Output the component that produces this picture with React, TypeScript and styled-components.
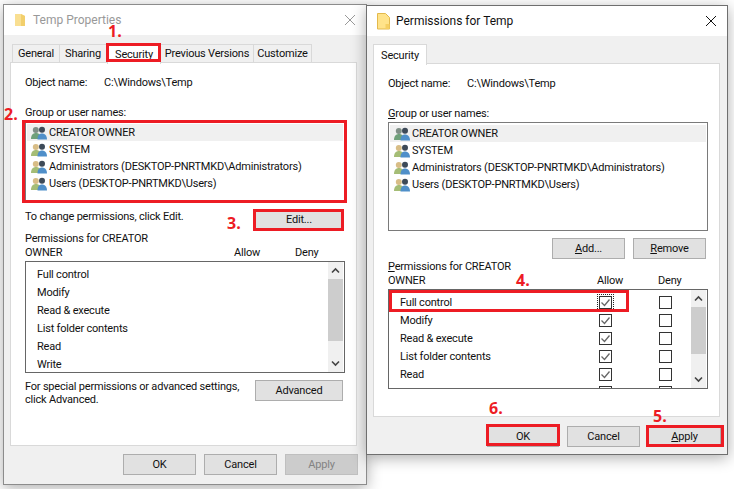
import React from "react";
import styled, { createGlobalStyle } from "styled-components";

const GlobalStyle = createGlobalStyle`
  html, body {
    margin: 0;
    padding: 0;
    background: #fff;
  }
  body {
    font-family: Roboto, "Liberation Sans", sans-serif;
    font-size: 11px;
    letter-spacing: -0.2px;
    color: #111;
  }
`;

const Desktop = styled.div`
  position: relative;
  width: 734px;
  height: 489px;
  overflow: hidden;
  display: flex;
  align-items: flex-start;
  padding: 4px 0 0 3px;
  box-sizing: border-box;
`;

const Window = styled.div<{ $width: number; $height: number; $active?: boolean }>`
  width: ${(p) => p.$width}px;
  height: ${(p) => p.$height}px;
  box-sizing: border-box;
  flex: none;
  display: flex;
  flex-direction: column;
  background: #f0f0f0;
  border: 1px solid ${(p) => (p.$active ? "#6f6f6f" : "#8c8c8c")};
  box-shadow: 0 3px 14px rgba(0, 0, 0, 0.32);
  z-index: ${(p) => (p.$active ? 2 : 1)};
  margin: ${(p) => (p.$active ? "1px 0 0 -1px" : "0")};
`;

const TitleBar = styled.div<{ $active?: boolean }>`
  height: 30px;
  flex: none;
  display: flex;
  align-items: center;
  background: #fff;
  padding: 0 8px 0 ${(p) => (p.$active ? 10 : 11)}px;
  gap: ${(p) => (p.$active ? 6 : 8)}px;
  color: ${(p) => (p.$active ? "#111" : "#999")};
  font-size: 12px;
  letter-spacing: 0;
`;

const TitleText = styled.span`
  flex: 1;
`;

const Body = styled.div`
  flex: 1;
  display: flex;
  flex-direction: column;
  padding: 9px 6px 0;
`;

const TabStrip = styled.div<{ $indent: number }>`
  display: flex;
  height: 18px;
  padding-left: ${(p) => p.$indent}px;
  position: relative;
  z-index: 1;
`;

const Tab = styled.div<{ $width: number; $selected?: boolean }>`
  width: ${(p) => p.$width}px;
  box-sizing: border-box;
  display: flex;
  align-items: center;
  justify-content: center;
  white-space: nowrap;
  border: 1px solid #d9d9d9;
  border-left-width: ${(p) => (p.$selected ? 1 : 0)}px;
  border-bottom: 0;
  background: ${(p) => (p.$selected ? "#fff" : "#f0f0f0")};
  height: ${(p) => (p.$selected ? 21 : 18)}px;
  margin-top: ${(p) => (p.$selected ? -1 : 0)}px;

  &:first-child {
    border-left-width: 1px;
  }
`;

const Panel = styled.div<{ $height: number; $width: number }>`
  width: ${(p) => p.$width}px;
  height: ${(p) => p.$height}px;
  flex: none;
  box-sizing: border-box;
  background: #fff;
  border: 1px solid #d9d9d9;
  padding: 12px 10px 0 14px;
`;

const ObjectRow = styled.div`
  display: flex;
  height: 16px;
  line-height: 16px;
  margin-bottom: 14px;
`;

const ObjectLabel = styled.span`
  width: 79px;
`;

const FieldLabel = styled.div`
  line-height: 16px;
  height: 16px;
`;

const ListBox = styled.div<{ $height: number; $width: number }>`
  width: ${(p) => p.$width}px;
  height: ${(p) => p.$height}px;
  box-sizing: border-box;
  border: 1px solid #7a7a7a;
  padding: 2px 1px 0;
  overflow: hidden;
`;

const UserRow = styled.div<{ $selected?: boolean }>`
  height: 17px;
  display: flex;
  align-items: center;
  padding-left: 4px;
  gap: 2px;
  background: ${(p) => (p.$selected ? "#f0f0f0" : "transparent")};
  white-space: nowrap;
`;

const EditRow = styled.div`
  display: flex;
  justify-content: space-between;
  height: 21px;
  margin-top: 7px;
  padding-right: 3px;
  line-height: 16px;
`;

const ButtonRow = styled.div`
  display: flex;
  justify-content: flex-end;
  gap: 8px;
  margin-top: 7px;
  padding-right: 3px;
`;

const Button = styled.div<{ $width: number; $disabled?: boolean }>`
  width: ${(p) => p.$width}px;
  height: 21px;
  flex: none;
  box-sizing: border-box;
  display: flex;
  align-items: center;
  justify-content: center;
  border: 1px solid ${(p) => (p.$disabled ? "#bfbfbf" : "#adadad")};
  background: ${(p) => (p.$disabled ? "#cccccc" : "#e1e1e1")};
  color: ${(p) => (p.$disabled ? "#838383" : "#111")};
`;

const PermHeader = styled.div<{ $top: number }>`
  display: grid;
  grid-template-columns: 209px 61px 1fr;
  margin-top: ${(p) => p.$top}px;
  line-height: 14px;
  align-items: end;
  margin-bottom: 1px;
`;

const PermTitle = styled.div`
  width: 150px;
`;

const PermList = styled.div<{ $height: number }>`
  position: relative;
  width: 320px;
  height: ${(p) => p.$height}px;
  box-sizing: border-box;
  border: 1px solid #666;
  display: flex;
  overflow: hidden;
`;

const PermRows = styled.div`
  flex: 1;
  padding-top: 3px;
`;

const PermRow = styled.div`
  display: grid;
  grid-template-columns: 199px 60px 1fr;
  align-items: center;
  height: 18px;
  padding-left: 11px;
  white-space: nowrap;
`;

const CheckBox = styled.div<{ $focused?: boolean }>`
  position: relative;
  width: 13px;
  height: 13px;
  box-sizing: border-box;
  border: 1px solid #333;
  background: #fff;
  display: flex;
  align-items: center;
  justify-content: center;

  ${(p) =>
    p.$focused &&
    `&::after {
      content: "";
      position: absolute;
      inset: -3px;
      border: 1px dotted #222;
    }`}
`;

const ScrollBar = styled.div`
  width: 15px;
  margin: 0 1px 0 0;
  flex: none;
  display: flex;
  flex-direction: column;
  align-items: stretch;
  background: #f0f0f0;
`;

const ScrollButton = styled.div`
  height: 17px;
  flex: none;
  display: flex;
  align-items: center;
  justify-content: center;
`;

const ScrollTrack = styled.div`
  flex: 1;
`;

const ScrollThumb = styled.div<{ $height: number }>`
  height: ${(p) => p.$height}px;
  background: #cdcdcd;
`;

const AdvancedRow = styled.div`
  display: flex;
  justify-content: space-between;
  margin-top: 7px;
  padding-right: 3px;
  line-height: 13px;
`;

const Footer = styled.div<{ $top: number; $right: number }>`
  display: flex;
  justify-content: flex-end;
  gap: 8px;
  margin-top: ${(p) => p.$top}px;
  padding-right: ${(p) => p.$right}px;
`;

const Underline = styled.span`
  text-decoration: underline;
`;

const Highlight = styled.div<{ $x: number; $y: number; $w: number; $h: number }>`
  position: absolute;
  left: ${(p) => p.$x}px;
  top: ${(p) => p.$y}px;
  width: ${(p) => p.$w}px;
  height: ${(p) => p.$h}px;
  box-sizing: border-box;
  border: 3px solid #ed1c24;
  z-index: 5;
`;

const StepNumber = styled.div<{ $x: number; $y: number }>`
  position: absolute;
  left: ${(p) => p.$x}px;
  top: ${(p) => p.$y}px;
  font-family: "Open Sans", sans-serif;
  font-weight: 700;
  font-size: 16px;
  line-height: 18px;
  letter-spacing: 0;
  color: #ed1c24;
  z-index: 6;
`;

const FolderIcon = () => (
  <svg width="13" height="17" viewBox="0 0 13 17" style={{ flex: "none" }}>
    <path d="M.5.5h8l4 4v11.5H.5z" fill="#ffe38a" stroke="#e3b94c" />
    <path d="M8.5 11h4v5h-4z" fill="#f5cf63" />
  </svg>
);

const SmallFolderIcon = () => (
  <svg width="10" height="12" viewBox="0 0 10 12" style={{ flex: "none" }}>
    <path d="M0 0h6l4 2v10H0z" fill="#f9df92" />
    <path d="M6 0v12h4V2z" fill="#f2cf6c" />
  </svg>
);

const CloseIcon = ({ color }: { color: string }) => (
  <svg width="12" height="12" viewBox="0 0 12 12" style={{ flex: "none", marginRight: 2 }}>
    <path d="M1 1l10 10M11 1L1 11" stroke={color} strokeWidth="1" fill="none" />
  </svg>
);

const UsersIcon = ({ muted }: { muted?: boolean }) => (
  <svg width="16" height="14" viewBox="0 0 16 14" style={{ flex: "none" }}>
    <circle cx="4.800" cy="4" r="3" fill={muted ? "#7f8f86" : "#d8bd86"} />
    <path d="M0 13c0-4 2-6 5-6s5 2 5 6z" fill={muted ? "#6fa07a" : "#a5bd76"} />
    <circle cx="11" cy="3.700" r="3" fill="#3d4a58" />
    <path d="M6.500 13.500c0-4 1.800-6 4.500-6s5 2 5 6z" fill="#4f8fc9" />
  </svg>
);

const Check = () => (
  <svg width="11" height="11" viewBox="0 0 11 11">
    <path d="M1.500 5.500l3 3 5-6" stroke="#666" strokeWidth="1.300" fill="none" />
  </svg>
);

const Chevron = ({ down }: { down?: boolean }) => (
  <svg width="9" height="7" viewBox="0 0 9 7">
    <path d={down ? "M1 1.500l3.500 3.500 3.500-3.500" : "M1 5.500l3.500-3.500 3.500 3.500"} stroke="#444" strokeWidth="1.600" fill="none" />
  </svg>
);

const users = [
  "CREATOR OWNER",
  "SYSTEM",
  "Administrators (DESKTOP-PNRTMKD\\Administrators)",
  "Users (DESKTOP-PNRTMKD\\Users)",
];

const UserList = ({ height, width }: { height: number; width: number }) => (
  <ListBox $height={height} $width={width}>
    {users.map((name, i) => (
      <UserRow key={name} $selected={i === 0}>
        <UsersIcon muted={i === 0} />
        {name}
      </UserRow>
    ))}
  </ListBox>
);

const PermScroll = ({ thumb }: { thumb: number }) => (
  <ScrollBar>
    <ScrollButton>
      <Chevron />
    </ScrollButton>
    <ScrollThumb $height={thumb} />
    <ScrollTrack />
    <ScrollButton>
      <Chevron down />
    </ScrollButton>
  </ScrollBar>
);

const plainPerms = ["Full control", "Modify", "Read & execute", "List folder contents", "Read", "Write"];

export default function App() {
  return (
    <>
      <GlobalStyle />
      <Desktop>
        <Window $width={364} $height={481}>
          <TitleBar>
            <SmallFolderIcon />
            <TitleText>Temp Properties</TitleText>
            <CloseIcon color="#999" />
          </TitleBar>
          <Body>
            <TabStrip $indent={2}>
              <Tab $width={48}>General</Tab>
              <Tab $width={47}>Sharing</Tab>
              <Tab $width={54} $selected>Security</Tab>
              <Tab $width={93}>Previous Versions</Tab>
              <Tab $width={58}>Customize</Tab>
            </TabStrip>
            <Panel $width={347} $height={384}>
              <ObjectRow>
                <ObjectLabel>Object name:</ObjectLabel>
                C:\Windows\Temp
              </ObjectRow>
              <FieldLabel>Group or user names:</FieldLabel>
              <UserList height={81} width={320} />
              <EditRow>
                To change permissions, click Edit.
                <Button $width={88}>Edit...</Button>
              </EditRow>
              <PermHeader $top={2}>
                <PermTitle>Permissions for CREATOR OWNER</PermTitle>
                <span>Allow</span>
                <span>Deny</span>
              </PermHeader>
              <PermList $height={112}>
                <PermRows>
                  {plainPerms.map((name) => (
                    <PermRow key={name}>{name}</PermRow>
                  ))}
                </PermRows>
                <PermScroll thumb={62} />
              </PermList>
              <AdvancedRow>
                <div>
                  For special permissions or advanced settings,
                  <br />
                  click Advanced.
                </div>
                <Button $width={88}>Advanced</Button>
              </AdvancedRow>
            </Panel>
            <Footer $top={8} $right={2}>
              <Button $width={73}>OK</Button>
              <Button $width={73}>Cancel</Button>
              <Button $width={73} $disabled>Apply</Button>
            </Footer>
          </Body>
        </Window>

        <Window $width={362} $height={450} $active>
          <TitleBar $active>
            <FolderIcon />
            <TitleText>Permissions for Temp</TitleText>
            <CloseIcon color="#111" />
          </TitleBar>
          <Body>
            <TabStrip $indent={0}>
              <Tab $width={54} $selected>Security</Tab>
            </TabStrip>
            <Panel $width={347} $height={354}>
              <ObjectRow>
                <ObjectLabel>Object name:</ObjectLabel>
                C:\Windows\Temp
              </ObjectRow>
              <FieldLabel>
                <Underline>G</Underline>roup or user names:
              </FieldLabel>
              <UserList height={109} width={320} />
              <ButtonRow>
                <Button $width={73}>
                  <span>
                    <Underline>A</Underline>dd...
                  </span>
                </Button>
                <Button $width={73}>
                  <span>
                    <Underline>R</Underline>emove
                  </span>
                </Button>
              </ButtonRow>
              <PermHeader $top={1}>
                <PermTitle>
                  <Underline>P</Underline>ermissions for CREATOR OWNER
                </PermTitle>
                <span>Allow</span>
                <span>Deny</span>
              </PermHeader>
              <PermList $height={100}>
                <PermRows>
                  {plainPerms.slice(0, 5).map((name, i) => (
                    <PermRow key={name}>
                      {name}
                      <CheckBox $focused={i === 0}>
                        <Check />
                      </CheckBox>
                      <CheckBox />
                    </PermRow>
                  ))}
                  <PermRow>
                    <span />
                    <CheckBox />
                    <CheckBox />
                  </PermRow>
                </PermRows>
                <PermScroll thumb={47} />
              </PermList>
            </Panel>
            <Footer $top={9} $right={0}>
              <Button $width={72}>OK</Button>
              <Button $width={73}>Cancel</Button>
              <Button $width={73}>
                <span>
                  <Underline>A</Underline>pply
                </span>
              </Button>
            </Footer>
          </Body>
        </Window>

        <Highlight $x={106} $y={43} $w={55} $h={19} />
        <Highlight $x={22} $y={120} $w={325} $h={83} />
        <Highlight $x={253} $y={209} $w={91} $h={22} />
        <Highlight $x={389} $y={290} $w={240} $h={22} />
        <Highlight $x={486} $y={424} $w={74} $h={22} />
        <Highlight $x={646} $y={425} $w={78} $h={22} />

        <StepNumber $x={108} $y={22}>1.</StepNumber>
        <StepNumber $x={4} $y={105}>2.</StepNumber>
        <StepNumber $x={227} $y={214}>3.</StepNumber>
        <StepNumber $x={516} $y={271}>4.</StepNumber>
        <StepNumber $x={653} $y={407}>5.</StepNumber>
        <StepNumber $x={489} $y={399}>6.</StepNumber>
      </Desktop>
    </>
  );
}
